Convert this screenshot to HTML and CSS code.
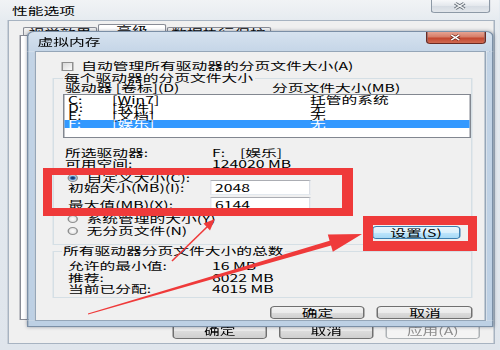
FILE: index.html
```html
<!DOCTYPE html>
<html lang="zh-CN">
<head>
<meta charset="utf-8">
<title>虚拟内存</title>
<link rel="stylesheet" href="styles.css">
</head>
<body>
<div class="screen">
  <div class="outer">
    <div class="o-title">
      <span class="o-title-text">性能选项</span>
      <span class="o-close">
        <svg class="x-ico" viewBox="0 0 9 8" width="9" height="8"><path d="M1.5 1.2L7.5 6.8M7.5 1.2L1.5 6.8" stroke="#5d6670" stroke-width="2.6" fill="none"/><path d="M1.5 1.2L7.5 6.8M7.5 1.2L1.5 6.8" stroke="#eef0f2" stroke-width="1.2" fill="none"/></svg>
      </span>
    </div>
    <div class="o-client">
      <div class="tabs">
        <span class="tab t1">视觉效果</span>
        <span class="tab t2">高级</span>
        <span class="tab t3">数据执行保护</span>
      </div>
      <div class="tab-panel"></div>
      <div class="o-buttons">
        <span class="btn ob">确定</span>
        <span class="btn ob">取消</span>
        <span class="btn ob dis">应用(A)</span>
      </div>
    </div>
  </div>

  <div class="inner">
    <div class="i-title">
      <span class="i-title-text">虚拟内存</span>
      <span class="i-close">
        <svg class="x-ico" viewBox="0 0 9 8" width="9" height="7"><path d="M1.5 1.2L7.5 6.8M7.5 1.2L1.5 6.8" stroke="#5a1a10" stroke-width="2.8" fill="none"/><path d="M1.5 1.2L7.5 6.8M7.5 1.2L1.5 6.8" stroke="#ffffff" stroke-width="1.4" fill="none"/></svg>
      </span>
    </div>
    <div class="i-client">
      <div class="chk-row"><span class="chk"></span><span>自动管理所有驱动器的分页文件大小(A)</span></div>

      <fieldset class="group g1">
        <legend class="lg1">每个驱动器的分页文件大小</legend>
        <div class="hdr"><span class="c1">驱动器 [卷标](D)</span><span>分页文件大小(MB)</span></div>
        <div class="list">
          <div class="row"><span>C:</span><span>[Win7]</span><span>托管的系统</span></div>
          <div class="row"><span>D:</span><span>[软件]</span><span>无</span></div>
          <div class="row"><span>E:</span><span>[文档]</span><span>无</span></div>
          <div class="row sel"><span>F:</span><span>[娱乐]</span><span>无</span></div>
        </div>
        <div class="info first"><span class="l">所选驱动器:</span><span class="f">F:</span><span>[娱乐]</span></div>
        <div class="info"><span class="l">可用空间:</span><span>124020 MB</span></div>
        <div class="radio-row r1"><span class="radio on"></span><span>自定义大小(C):</span></div>
        <div class="field-row first"><span class="l">初始大小(MB)(I):</span><span class="tb">2048</span></div>
        <div class="field-row second"><span class="l">最大值(MB)(X):</span><span class="tb">6144</span></div>
        <div class="radio-row r2"><span class="radio"></span><span>系统管理的大小(Y)</span></div>
        <div class="radio-row r3"><span class="radio"></span><span class="lbl">无分页文件(N)</span><span class="set-btn">设置(S)</span></div>
      </fieldset>

      <fieldset class="group g2">
        <legend class="lg2">所有驱动器分页文件大小的总数</legend>
        <div class="tot first"><span class="l">允许的最小值:</span><span>16 MB</span></div>
        <div class="tot"><span class="l">推荐:</span><span>6022 MB</span></div>
        <div class="tot"><span class="l">当前已分配:</span><span>4015 MB</span></div>
      </fieldset>

      <div class="i-buttons">
        <span class="btn ib b-ok">确定</span>
        <span class="btn ib b-cancel">取消</span>
      </div>
    </div>
  </div>
</div>

<svg class="annot" width="500" height="350" viewBox="0 0 500 350">
  <path fill="#ef3a3a" fill-rule="evenodd" d="M43 168H353V216H43Z M52 175V208H342V175Z"/>
  <path fill="#ef3a3a" fill-rule="evenodd" d="M363 216H477V251H363Z M373 225V241H468V225Z"/>
  <line x1="172" y1="261" x2="208" y2="226" stroke="#ef3a3a" stroke-width="1.6"/>
  <polygon fill="#ef3a3a" points="215,219 210,230.5 203.5,223.5"/>
  <polygon fill="#ef3a3a" points="87.9,313.5 329.6,240.8 327.8,234.6 362,234 332.8,251.8 331,245.6 88.1,314.5"/>
</svg>
</body>
</html>
```

FILE: styles.css
```css
html, body {
  margin: 0;
  padding: 0;
}
body {
  width: 500px;
  height: 350px;
  overflow: hidden;
  position: relative;
  background: #dfe6ee;
}
.screen {
  position: relative;
  width: 333.333px;
  height: 350px;
  transform: scaleX(1.5);
  transform-origin: 0 0;
  font-family: "Noto Sans CJK SC", "Noto Sans", sans-serif;
  font-size: 10.5px;
  color: #000;
  background: linear-gradient(180deg, #f1f3f5 0px, #e6ebf0 20px, #dfe5ec 100%);
}

/* ---------- outer window ---------- */
.outer {
  display: flex;
  flex-direction: column;
  height: 350px;
}
.o-title {
  display: flex;
  justify-content: space-between;
  align-items: flex-start;
  height: 20px;
  flex: none;
}
.o-title-text {
  margin: 6px 0 0 8px;
  line-height: 10px;
}
.o-close {
  box-sizing: border-box;
  width: 40px;
  height: 13px;
  margin-right: 6.6px;
  border: 1px solid #8d99a6;
  border-top: none;
  border-radius: 0 0 3px 3px;
  background: linear-gradient(#f7f8fa, #e3e7ec 50%, #d6dce3 51%, #e2e6eb);
  display: flex;
  align-items: center;
  justify-content: center;
}
.x-ico {
  display: block;
}
.o-client {
  box-sizing: border-box;
  margin: 0 3.333px 0 5.333px;
  height: 324px;
  background: #f0f0f0;
  border: 1px solid #a7b3c1;
  padding: 3px 0 0 7px;
}
.tabs {
  display: flex;
  align-items: flex-end;
  height: 11px;
  padding-left: 1.333px;
}
.tab {
  box-sizing: border-box;
  height: 8px;
  border: 1px solid #898c95;
  border-bottom: none;
  border-radius: 2px 2px 0 0;
  background: linear-gradient(#f4f4f4, #e4e4e4);
  line-height: 10px;
  text-align: center;
  overflow: hidden;
  white-space: nowrap;
}
.t1 { width: 50.667px; }
.t2 { width: 45.333px; height: 11px; background: #fff; }
.t3 { width: 70px; }
.tab-panel {
  box-sizing: border-box;
  height: 285px;
  width: 313.333px;
  border: 1px solid #898c95;
  background: #fff;
}
.o-buttons {
  display: flex;
  justify-content: flex-end;
  gap: 8px;
  margin-top: 2px;
  padding-right: 9px;
}
.btn {
  box-sizing: border-box;
  border: 1px solid #707070;
  border-radius: 3px;
  background: linear-gradient(#f2f2f2 0%, #ebebeb 50%, #dddddd 51%, #cfcfcf 100%);
  text-align: center;
  white-space: nowrap;
}
.ob {
  width: 63px;
  height: 17px;
  line-height: 15px;
}
.btn.dis {
  border-color: #adb2b5;
  background: #f4f4f4;
  color: #8d8d8d;
}

/* ---------- inner dialog ---------- */
.inner {
  position: absolute;
  left: 18px;
  top: 31px;
  width: 310.667px;
  height: 296px;
  box-sizing: border-box;
  border: 1px solid #7b8fa6;
  border-radius: 5px 5px 0 0;
  background: linear-gradient(180deg, #d6e2ef 0px, #c3d4e6 22px, #bdd0e4 100%);
  padding: 0 4px 6px 4.333px;
  display: flex;
  flex-direction: column;
  box-shadow: 0 0 3px rgba(40, 50, 70, 0.45);
}
.i-title {
  display: flex;
  justify-content: space-between;
  align-items: flex-start;
  height: 19px;
  flex: none;
}
.i-title-text {
  margin: 5px 0 0 1.7px;
  line-height: 10px;
}
.i-close {
  box-sizing: border-box;
  width: 40px;
  height: 12px;
  border: 1px solid #6b2a22;
  border-top: none;
  border-radius: 0 0 3px 3px;
  background: linear-gradient(#e6a392 0%, #d67d68 45%, #c4472f 55%, #cf6a52 100%);
  display: flex;
  align-items: center;
  justify-content: center;
}
.i-client {
  box-sizing: border-box;
  height: 270px;
  background: #f0f0f0;
  border: 1px solid #95a6b8;
  flex: none;
}
.chk-row {
  display: flex;
  align-items: center;
  height: 10px;
  line-height: 10px;
  margin: 9px 0 0 16.4px;
  white-space: nowrap;
}
.chk {
  box-sizing: border-box;
  width: 8.5px;
  height: 9px;
  border: 1px solid #8f8f8f;
  background: linear-gradient(135deg, #d8d8d8, #fbfbfb);
  margin-right: 4.9px;
  flex: none;
}
.group {
  margin: 2px 8px 0 11px;
  padding: 0 0 5px 0;
  border: 1px solid #d5dfe5;
  min-width: 0;
}
.group legend {
  padding: 0 1px;
  line-height: 10px;
  white-space: nowrap;
}
.lg1 { margin-left: 5.4px; }
.lg2 { margin-left: 4.7px; }
.g2 {
  margin-top: 1px;
  padding-bottom: 2px;
}
.hdr {
  display: flex;
  line-height: 10px;
  padding-left: 7px;
  white-space: nowrap;
}
.hdr .c1 { width: 138px; }
.list {
  box-sizing: border-box;
  height: 44px;
  margin: 1px 0 0 5.7px;
  border: 1px solid #828790;
  background: #fff;
  padding-top: 1px;
}
.row {
  display: grid;
  grid-template-columns: 29.4px 132px 1fr;
  height: 8px;
  line-height: 8px;
  padding-left: 2.3px;
  white-space: nowrap;
}
.row.sel {
  background: #3399ff;
  color: #fff;
}
.info {
  display: flex;
  line-height: 10.5px;
  padding-left: 7px;
  white-space: nowrap;
}
.info.first { margin-top: 10px; }
.info .l { width: 98px; }
.info .f { width: 18.7px; }
.radio-row {
  display: flex;
  align-items: center;
  margin-left: 8.4px;
  white-space: nowrap;
}
.radio {
  box-sizing: border-box;
  width: 7px;
  height: 8px;
  border-radius: 50%;
  border: 1px solid #8e8f8f;
  background: radial-gradient(circle, #ffffff, #d9d9d9);
  margin-right: 5.9px;
  flex: none;
}
.radio.on {
  background: radial-gradient(circle, #0f2e5a 0, #1c4d8c 30%, #6fa3d8 50%, #d6e4f2 70%, #f2f5f8 100%);
}
.r1 {
  height: 11px;
  line-height: 11px;
  margin-top: 3px;
}
.r2 {
  height: 12px;
  line-height: 12px;
  margin-top: 1px;
}
.r3 {
  height: 14px;
  align-items: flex-start;
}
.r3 .radio { margin-top: 2px; }
.r3 .lbl { line-height: 12px; }
.set-btn {
  box-sizing: border-box;
  margin: 1px 7px 0 auto;
  width: 58.7px;
  height: 13px;
  border: 1px solid #3c7fb1;
  border-radius: 3px;
  background: linear-gradient(#eaf6fd 0%, #d9f0fc 50%, #bee6fd 51%, #a7d9f5 100%);
  line-height: 11px;
  text-align: center;
}
.field-row {
  display: flex;
  align-items: center;
  height: 15px;
  padding-left: 9px;
  white-space: nowrap;
}
.field-row.first { margin-top: -3px; }
.field-row.second { margin-top: 2px; }
.field-row .l { width: 94.7px; }
.tb {
  box-sizing: border-box;
  width: 66.7px;
  height: 15px;
  border: 1px solid #abadb3;
  border-left-color: #e2e3ea;
  border-right-color: #dbdfe6;
  border-bottom-color: #e3e9ef;
  background: #fff;
  padding-left: 2.3px;
  line-height: 13px;
}
.tot {
  display: flex;
  line-height: 11.5px;
  padding-left: 9px;
  white-space: nowrap;
}
.tot.first { margin-top: 4px; }
.tot .l { width: 96px; }
.i-buttons {
  display: flex;
  justify-content: flex-end;
  gap: 8px;
  margin: 8.5px 7.4px 0 0;
}
.ib {
  height: 13px;
  line-height: 11px;
}
.b-ok { width: 63.3px; }
.b-cancel { width: 64px; }

/* ---------- red annotations ---------- */
.annot {
  position: absolute;
  left: 0;
  top: 0;
  pointer-events: none;
}
```
